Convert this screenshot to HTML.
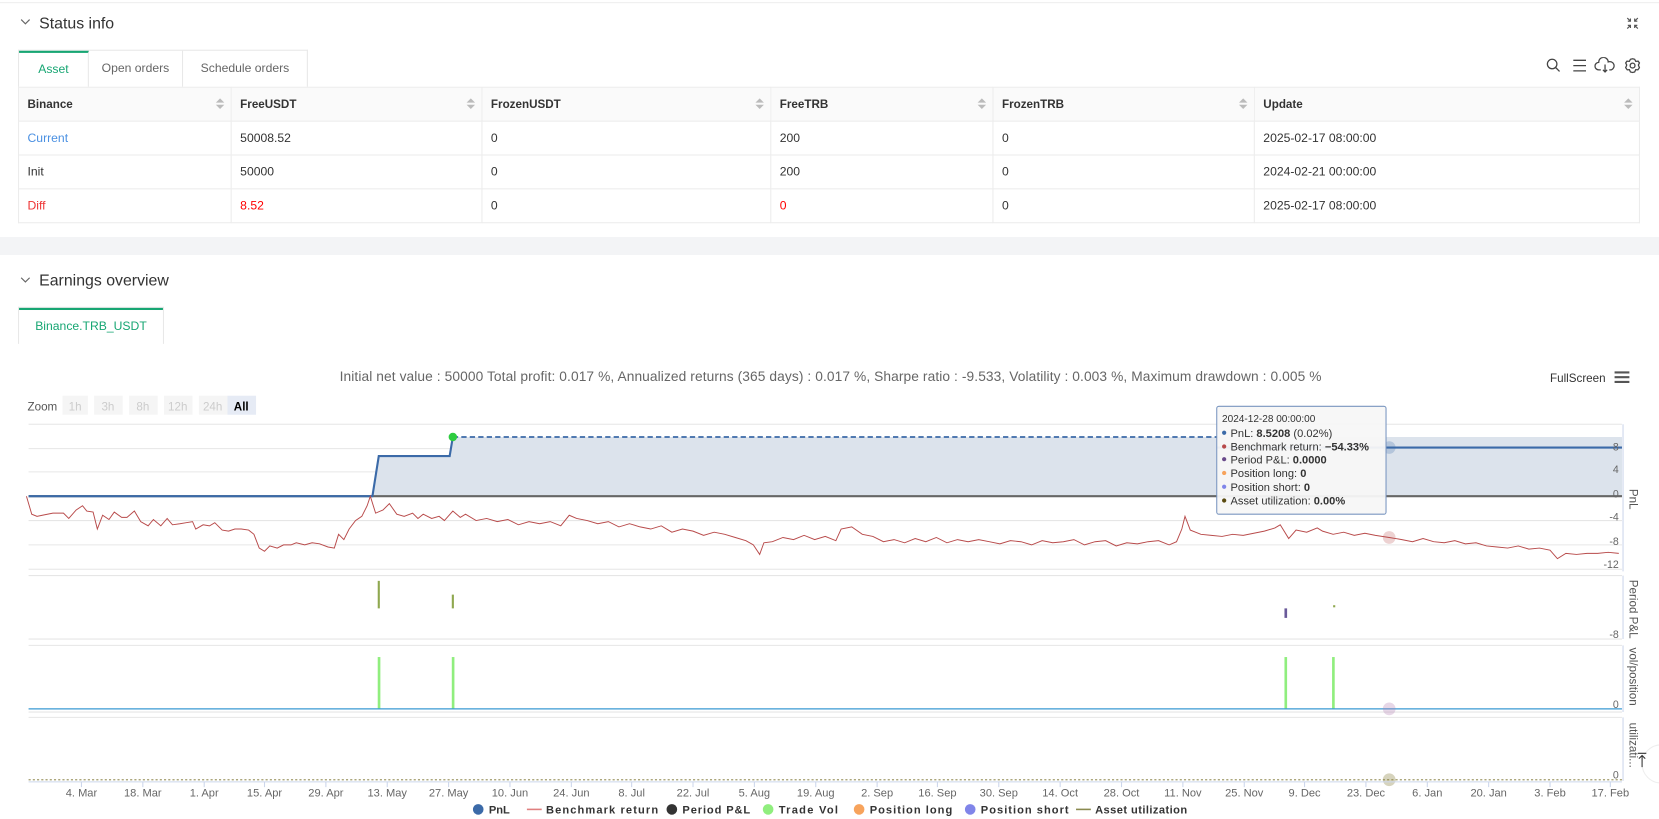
<!DOCTYPE html>
<html><head><meta charset="utf-8"><style>
*{box-sizing:border-box;margin:0;padding:0}
html,body{width:1659px;height:819px;overflow:hidden;background:#fff}
#w{width:1568px;height:774px;transform:scale(1.05804);transform-origin:0 0;position:relative;font-family:"Liberation Sans",sans-serif;color:#333}
.abs{position:absolute}
.h{font-size:15px;color:#333;font-weight:500}
.tabs{display:flex;border:1px solid #e8e8e8;border-bottom:none}
.tab{font-size:11.5px;color:#666;line-height:34px;border-right:1px solid #e8e8e8;text-align:center}
.tab.a{color:#17a673;border-top:2px solid #17a673;line-height:32px}
table{border-collapse:collapse;font-size:11.5px}
td,th{border:1px solid #ececec;height:32px;padding:0 8px;text-align:left;font-weight:normal}
th{background:#fafafa;font-weight:bold;color:#333;position:relative;font-size:11px}
th i{position:absolute;right:8px;top:10px;width:6px;height:12px}
th i:before,th i:after{content:"";position:absolute;left:0;border-left:4px solid transparent;border-right:4px solid transparent}
th i:before{top:0;border-bottom:4px solid #bbb}
th i:after{top:6px;border-top:4px solid #bbb}
</style></head><body><div id="w">
<div class="abs" style="top:2px;left:0;width:1568px;border-top:1px solid #eee"></div>
<svg class="abs" style="left:19px;top:17px" width="10" height="8"><path d="M1 1.5L5 5.5L9 1.5" fill="none" stroke="#666" stroke-width="1.1"/></svg>
<div class="abs h" style="left:37px;top:14px">Status info</div>
<svg class="abs" style="left:1537px;top:16px" width="12" height="12" fill="none" stroke="#555" stroke-width="1.1"><path d="M1 1L4 4M4 1.5V4H1.5M11 1L8 4M8 1.5V4H10.5M1 11L4 8M1.5 8H4V10.5M11 11L8 8M10.5 8H8V10.5"/></svg>
<div class="abs tabs" style="left:17px;top:47px;height:35px"><div class="tab a" style="width:66px">Asset</div><div class="tab" style="width:89px">Open orders</div><div class="tab" style="width:117px;border-right:none">Schedule orders</div></div>
<svg class="abs" style="left:1460px;top:54px" width="95" height="16" fill="none" stroke="#444" stroke-width="1.2"><circle cx="7" cy="6.5" r="4.5"/><path d="M10.3 9.8L14 13.5"/><path d="M27 3H39M27 8H39M27 13H39"/><path d="M53 12H51A3.5 3.5 0 0 1 51 5A4.5 4.5 0 0 1 60 4.5A3.5 3.5 0 0 1 63 12H61M57 7V14M55 12L57 14L59 12"/><circle cx="83" cy="8" r="2.3"/><path d="M83 1.5L85 2L86 4L88.3 3.8L89.5 5.5L88.5 7.5L89.5 10L88 12L86 11.8L85 14L83 14.5L81 14L80 11.8L78 12L76.5 10L77.5 7.5L76.5 5.5L77.7 3.8L80 4L81 2Z"/></svg>
<table class="abs" style="left:17px;top:82px;width:1533px">
<tr><th style="width:201px">Binance<i></i></th><th style="width:237px">FreeUSDT<i></i></th><th style="width:273px">FrozenUSDT<i></i></th><th style="width:210px">FreeTRB<i></i></th><th style="width:247px">FrozenTRB<i></i></th><th>Update<i></i></th></tr>
<tr><td style="color:#4a90e2">Current</td><td>50008.52</td><td>0</td><td>200</td><td>0</td><td>2025-02-17 08:00:00</td></tr>
<tr><td>Init</td><td>50000</td><td>0</td><td>200</td><td>0</td><td>2024-02-21 00:00:00</td></tr>
<tr><td style="color:#e33">Diff</td><td style="color:#f00">8.52</td><td>0</td><td style="color:#f00">0</td><td>0</td><td>2025-02-17 08:00:00</td></tr>
</table>
<div class="abs" style="left:0;top:224px;width:1568px;height:17px;background:#f3f4f6"></div>
<svg class="abs" style="left:19px;top:261px" width="10" height="8"><path d="M1 1.5L5 5.5L9 1.5" fill="none" stroke="#666" stroke-width="1.1"/></svg>
<div class="abs h" style="left:37px;top:257px">Earnings overview</div>
<div class="abs tabs" style="left:17px;top:290px;height:35px"><div class="tab a" style="width:136px;border-right:none">Binance.TRB_USDT</div></div>
<svg class="abs" style="left:0;top:330px" width="1568" height="444" font-family="Liberation Sans,sans-serif">
<g transform="translate(0,-330)">
<text x="785" y="360" font-size="13" fill="#666" text-anchor="middle" textLength="928">Initial net value : 50000 Total profit: 0.017 %, Annualized returns (365 days) : 0.017 %, Sharpe ratio : -9.533, Volatility : 0.003 %, Maximum drawdown : 0.005 %</text>
<text x="1465" y="361" font-size="11" fill="#333">FullScreen</text>
<path d="M1526 352H1540M1526 356.5H1540M1526 361H1540" stroke="#555" stroke-width="2"/>
<text x="26" y="388" font-size="11" fill="#555">Zoom</text>
<g font-size="11" text-anchor="middle"><rect x="59" y="374" width="24" height="18" fill="#f5f5f5"/><text x="71" y="388" fill="#ccc">1h</text>
<rect x="89" y="374" width="27" height="18" fill="#f5f5f5"/><text x="102" y="388" fill="#ccc">3h</text>
<rect x="122" y="374" width="27" height="18" fill="#f5f5f5"/><text x="135" y="388" fill="#ccc">8h</text>
<rect x="155" y="374" width="27" height="18" fill="#f5f5f5"/><text x="168" y="388" fill="#ccc">12h</text>
<rect x="188" y="374" width="27" height="18" fill="#f5f5f5"/><text x="201" y="388" fill="#ccc">24h</text>
<rect x="215" y="374" width="27" height="18" fill="#e6ebf5"/><text x="228" y="388" fill="#000" font-weight="bold">All</text></g>
<g stroke="#e6e6e6"><path d="M27 401H1533M27 424H1533M27 446H1533M27 492H1533M27 515H1533M27 538H1533"/>
<path d="M27 544H1533M27 604H1533M27 610H1533M27 673H1533M27 678H1533"/></g>
<path d="M1534 401V540M1534 544V604M1534 610V673M1534 678V738" stroke="#ccd6eb"/>
<path d="M352 469L358 431H425L428 413H1533V469Z" fill="#dce3ec"/>
<path d="M27 469H1533" stroke="#666" stroke-width="2"/>
<path d="M27 469H352L358 431H425L428 413" fill="none" stroke="#3b6aa8" stroke-width="2"/>
<path d="M428 413H1150" stroke="#3b6aa8" stroke-width="1.6" stroke-dasharray="5,3"/>
<path d="M1150 423H1533" stroke="#3b6aa8" stroke-width="2"/>
<circle cx="428" cy="413" r="4" fill="#2ecc40"/>
<polyline fill="none" stroke="#b84a4a" stroke-width="0.9" points="25,469 30,486 35,488 40,487 50,485 60,485 65,490 72,482 78,478 82,483 88,484 92,500 97,487 103,491 108,484 115,489 120,489 127,483 133,493 140,497 145,491 152,497 158,490 163,496 170,495 176,494 182,493 185,500 192,496 198,497 203,494 210,501 216,502 222,500 228,500 235,501 240,505 245,518 250,521 255,516 262,518 268,515 275,515 280,513 288,515 295,513 302,514 310,517 316,518 320,505 325,510 330,500 336,492 342,488 347,478 350,469 355,485 362,482 368,476 375,486 382,488 390,485 395,490 400,486 408,490 415,488 420,492 428,483 435,489 440,486 450,492 460,490 470,493 480,491 490,496 500,493 510,495 520,493 530,497 538,487 545,490 555,492 565,495 575,493 585,498 595,495 605,498 615,500 625,497 635,503 645,500 655,502 665,506 675,503 685,505 695,508 705,511 712,515 718,524 722,513 730,512 740,508 750,510 760,506 770,510 780,507 790,511 795,500 805,498 815,505 825,507 835,512 845,510 855,513 865,509 875,512 885,508 895,513 905,510 915,512 925,510 935,512 945,514 955,511 965,512 975,515 985,511 995,513 1005,512 1015,510 1025,515 1035,512 1045,511 1055,516 1065,513 1075,514 1085,512 1095,511 1105,515 1112,512 1117,500 1120,488 1125,501 1135,505 1145,506 1155,507 1165,505 1175,506 1185,504 1195,502 1205,499 1210,496 1218,509 1225,501 1235,503 1245,499 1250,502 1260,505 1270,503 1280,506 1290,504 1300,506 1313,508 1325,510 1335,512 1345,509 1355,512 1365,513 1375,511 1385,514 1395,513 1405,516 1415,517 1425,518 1435,516 1445,519 1455,518 1465,520 1472,528 1480,523 1490,524 1500,523 1510,523 1520,522 1530,523"/>
<circle cx="1313" cy="423" r="6" fill="#3b6aa8" opacity=".25"/>
<circle cx="1313" cy="508" r="6" fill="#b84a4a" opacity=".25"/>
<g font-size="10" fill="#666" text-anchor="end"><text x="1530" y="426">8</text><text x="1530" y="447">4</text><text x="1530" y="470">0</text><text x="1530" y="492">-4</text><text x="1530" y="515">-8</text><text x="1530" y="537">-12</text><text x="1530" y="603">-8</text><text x="1530" y="669">0</text><text x="1530" y="736">0</text></g>
<g font-size="11" fill="#555"><text transform="translate(1540,462) rotate(90)">PnL</text><text transform="translate(1540,548) rotate(90)">Period P&amp;L</text><text transform="translate(1540,612) rotate(90)">vol/position</text><text transform="translate(1540,683) rotate(90)">utilizati...</text></g>
<rect x="357" y="549" width="2" height="26" fill="#8fa84f"/><rect x="427" y="562" width="2" height="13" fill="#8fa84f"/>
<rect x="1214" y="575" width="2.5" height="9" fill="#6a5a9a"/><rect x="1260" y="572" width="2" height="2" fill="#8fa84f"/>
<g fill="#90ee7e"><rect x="357" y="621" width="2.5" height="49"/><rect x="427" y="621" width="2.5" height="49"/><rect x="1214" y="621" width="2.5" height="49"/><rect x="1259" y="621" width="2.5" height="49"/></g>
<path d="M27 670H1533" stroke="#3a9ad3" stroke-width="1.2"/>
<circle cx="1313" cy="670" r="6" fill="#b07ab0" opacity=".3"/>
<path d="M27 737H1533" stroke="#a09a6a" stroke-width="1.2" stroke-dasharray="2,2"/>
<circle cx="1313" cy="737" r="6" fill="#8a8240" opacity=".35"/>
<path d="M27 739H1533" stroke="#ccd6eb"/>
<path stroke="#ccd6eb" d="M77 739v5M135 739v5M193 739v5M250 739v5M308 739v5M366 739v5M424 739v5M482 739v5M540 739v5M597 739v5M655 739v5M713 739v5M771 739v5M829 739v5M886 739v5M944 739v5M1002 739v5M1060 739v5M1118 739v5M1176 739v5M1233 739v5M1291 739v5M1349 739v5M1407 739v5M1465 739v5M1522 739v5"/>
<g font-size="10.5" fill="#666" text-anchor="middle">
<text x="77" y="753">4. Mar</text><text x="135" y="753">18. Mar</text><text x="193" y="753">1. Apr</text><text x="250" y="753">15. Apr</text><text x="308" y="753">29. Apr</text><text x="366" y="753">13. May</text><text x="424" y="753">27. May</text><text x="482" y="753">10. Jun</text><text x="540" y="753">24. Jun</text><text x="597" y="753">8. Jul</text><text x="655" y="753">22. Jul</text><text x="713" y="753">5. Aug</text><text x="771" y="753">19. Aug</text><text x="829" y="753">2. Sep</text><text x="886" y="753">16. Sep</text><text x="944" y="753">30. Sep</text><text x="1002" y="753">14. Oct</text><text x="1060" y="753">28. Oct</text><text x="1118" y="753">11. Nov</text><text x="1176" y="753">25. Nov</text><text x="1233" y="753">9. Dec</text><text x="1291" y="753">23. Dec</text><text x="1349" y="753">6. Jan</text><text x="1407" y="753">20. Jan</text><text x="1465" y="753">3. Feb</text><text x="1522" y="753">17. Feb</text></g>
<g font-size="10.5" fill="#333" font-weight="bold">
<circle cx="452" cy="765" r="5" fill="#3b6aa8"/><text x="462" y="769">PnL</text>
<path d="M498 765H512" stroke="#e08080" stroke-width="1.5"/><text x="516" y="769" textLength="106">Benchmark return</text>
<circle cx="635" cy="765" r="5" fill="#333"/><text x="645" y="769" textLength="64">Period P&amp;L</text>
<circle cx="726" cy="765" r="5" fill="#90ee7e"/><text x="736" y="769" textLength="56">Trade Vol</text>
<circle cx="812" cy="765" r="5" fill="#f7a35c"/><text x="822" y="769" textLength="78">Position long</text>
<circle cx="917" cy="765" r="5" fill="#8085e9"/><text x="927" y="769" textLength="83">Position short</text>
<path d="M1017 765H1031" stroke="#8a8a50" stroke-width="1.5"/><text x="1035" y="769" textLength="87">Asset utilization</text></g>
<rect x="1150" y="384" width="160" height="102" rx="2" fill="#f7f7f7" fill-opacity=".95" stroke="#7a96c0"/>
<g font-size="10.5" fill="#333"><text x="1155" y="399" font-size="9.5">2024-12-28 00:00:00</text>
<circle cx="1157" cy="409" r="2" fill="#3b6aa8"/><text x="1163" y="413">PnL: <tspan font-weight="bold">8.5208</tspan> (0.02%)</text>
<circle cx="1157" cy="422" r="2" fill="#b84a4a"/><text x="1163" y="426">Benchmark return: <tspan font-weight="bold">−54.33%</tspan></text>
<circle cx="1157" cy="434" r="2" fill="#6a4a8a"/><text x="1163" y="438">Period P&amp;L: <tspan font-weight="bold">0.0000</tspan></text>
<circle cx="1157" cy="447" r="2" fill="#f7a35c"/><text x="1163" y="451">Position long: <tspan font-weight="bold">0</tspan></text>
<circle cx="1157" cy="460" r="2" fill="#8085e9"/><text x="1163" y="464">Position short: <tspan font-weight="bold">0</tspan></text>
<circle cx="1157" cy="473" r="2" fill="#5a4a10"/><text x="1163" y="477">Asset utilization: <tspan font-weight="bold">0.00%</tspan></text></g>
<circle cx="1570" cy="722" r="18" fill="#fff" stroke="#eee"/>
<path d="M1548 712H1556M1552 714V725M1549 717L1552 714L1555 717" stroke="#333" fill="none"/>
</g></svg>
</div></body></html>
